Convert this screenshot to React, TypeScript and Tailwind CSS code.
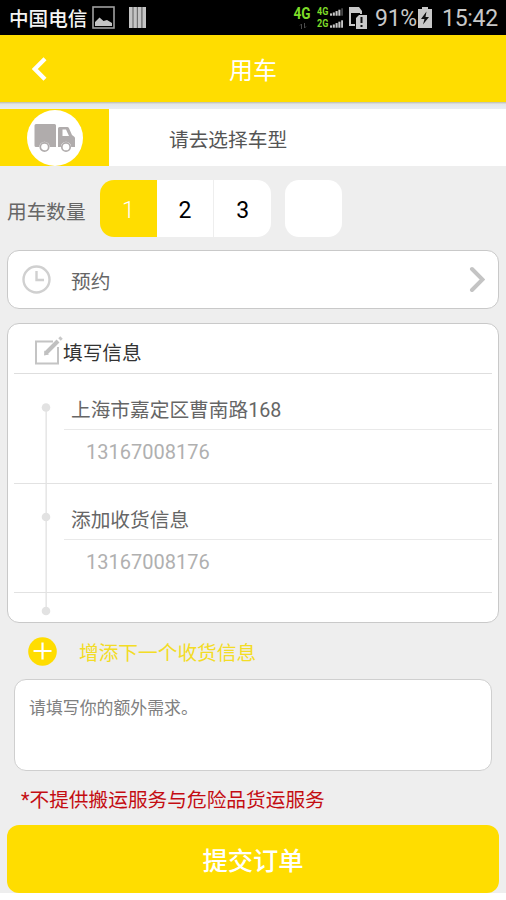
import React, { useState } from 'react';

const stops = [
  { id: 'from', title: '上海市嘉定区曹南路168', phone: '13167008176' },
  { id: 'to', title: '添加收货信息', phone: '13167008176' },
];

const SignalBars = ({ dim }: { dim?: boolean }) => (
  <svg className="h-[8px] w-[13px]" viewBox="0 0 14 8" fill="#c8c8c8">
    <rect x="0" y="5.5" width="2.2" height="2.5" />
    <rect x="3" y="4.5" width="2.2" height="3.5" />
    <rect x="6" y="3" width="2.2" height="5" />
    <rect x="9" y="1.5" width="2.2" height="6.5" />
    <rect x="12" y="0" width="2" height="8" fill={dim ? '#444' : '#c8c8c8'} />
  </svg>
);

const StatusBar = () => (
  <div className="flex h-[35px] items-center bg-black pl-[9px] pr-[8px] text-[#c8c8c8]">
    <span className="pt-[4px] text-[19.6px] font-medium leading-[31px] text-[#f4f4f4]">中国电信</span>
    <svg className="ml-[5px] h-[23px] w-[23px]" viewBox="0 0 23 23">
      <rect x="1" y="1" width="21" height="21" fill="none" stroke="#a0a0a0" strokeWidth="1.6" />
      <path d="M3 20v-4l4.5-4.5 4 3.5 3.5-1 5 3v3z" fill="#c4c4c4" />
    </svg>
    <svg className="ml-[14px] h-[21px] w-[17px]" viewBox="0 0 17 21">
      <rect width="17" height="21" fill="#707070" />
      <path d="M0 0h3.4v21H0zM4.6 0h3.2v21H4.6zM9 0h3.2v21H9zM13.6 0H17v21h-3.4z" fill="#c4c4c4" />
    </svg>
    <div className="flex-1" />
    <div className="flex h-[22px] w-[17px] flex-col items-center">
      <span className="scale-x-[.85] text-[16px] font-bold leading-[14px] text-[#7ddb28]">4G</span>
      <svg className="mt-[2px] h-[6px] w-[8px]" viewBox="0 0 8 6" fill="none" stroke="#4a4a4a">
        <path d="M2.5 6V1L1 2.5M5.5 0v5L7 3.5" />
      </svg>
    </div>
    <div className="ml-[6px] mr-[6px] flex w-[26px] flex-col gap-[4px] text-[10px] font-bold leading-[8px] text-[#7ddb28]">
      <div className="flex h-[8px] items-center justify-between">
        <span className="w-[12px] origin-left scale-x-[.9]">4G</span>
        <SignalBars dim />
      </div>
      <div className="flex h-[8px] items-center justify-between">
        <span className="w-[12px] origin-left scale-x-[.9]">2G</span>
        <SignalBars />
      </div>
    </div>
    <svg className="h-[22px] w-[18px]" viewBox="0 0 18 22">
      <path d="M0 0h10l3 4v3h-2V6H2v11h4v2H0z" fill="#c8c8c8" />
      <path d="M10 8h8v14H7V11z" fill="#c8c8c8" />
      <path d="M11.5 10h2v6h-2zM11.5 18h2v2h-2z" fill="#111" />
    </svg>
    <span className="ml-[8px] w-[43px] whitespace-nowrap pt-[2px] text-[23px] leading-[33px] tracking-[-0.3px]">91%</span>
    <svg className="h-[21px] w-[14px]" viewBox="0 0 14 21">
      <path d="M4 0h6v2h4v19H0V2h4z" fill="#c8c8c8" />
      <path d="M8.5 4.5L3 12h3.5L5 17.5 11 10H7.5z" fill="#111" />
    </svg>
    <span className="ml-[10px] w-[56px] whitespace-nowrap pt-[2px] text-[23px] leading-[33px] tracking-[-0.3px]">15:42</span>
  </div>
);

const TruckIcon = () => (
  <svg className="h-[30px] w-[41px]" viewBox="0 0 41 30">
    <path d="M2 1h18.5A1.5 1.5 0 0 1 22 2.5V24H2a1.500 1.500 0 0 1-1.500-1.500v-20A1.500 1.500 0 0 1 2 1z" fill="#b0acac" />
    <path d="M25.500 4H33a2 2 0 0 1 2 1.200l3 6.800 2 1.500a2 2 0 0 1 1 1.700V24H24V5.500A1.500 1.500 0 0 1 25.500 4z" fill="#b0acac" />
    <path d="M28.500 6.500H32l3 6.500h-6.500z" fill="#fff" />
    <circle cx="10.500" cy="24" r="5.200" fill="#fff" />
    <circle cx="32" cy="24" r="5.200" fill="#fff" />
    <circle cx="10.500" cy="24" r="4.200" fill="#fff" stroke="#b0acac" strokeWidth="1.700" />
    <circle cx="32" cy="24" r="4.200" fill="#fff" stroke="#b0acac" strokeWidth="1.700" />
  </svg>
);

const App = () => {
  const [count, setCount] = useState(1);
  const [note, setNote] = useState('');

  return (
    <div className="h-[900px] w-[506px] overflow-hidden bg-white font-['Roboto','Noto_Sans_CJK_SC',sans-serif]">
      <StatusBar />

      <header className="flex h-[67px] items-center bg-[#ffdd00] text-white">
        <svg className="ml-[32px] h-[24px] w-[15px]" viewBox="0 0 15 24" fill="none" stroke="#fff" strokeWidth="4.2">
          <path d="M13 1.8L2.8 12 13 22.2" />
        </svg>
        <h1 className="mr-[47px] flex-1 pt-[6px] text-center text-[24px] font-normal leading-[61px]">用车</h1>
      </header>
      <div className="h-[7px] bg-linear-to-b from-[#bdbbaa] via-[#e2e6ea] via-30% to-[#e9edf4]" />

      <main className="h-[784px] bg-[#eeeeee]">
        <div className="flex h-[57px] items-center bg-white">
          <div className="flex h-full w-[109px] items-center justify-center bg-[#ffdd00]">
            <div className="flex h-[56px] w-[56px] items-center justify-center rounded-full bg-white">
              <TruckIcon />
            </div>
          </div>
          <span className="ml-[60px] pt-[6px] text-[19.7px] leading-[51px] text-[#555]">请去选择车型</span>
        </div>

        <div className="mt-[14px] flex h-[57px] items-center">
          <span className="ml-[7px] w-[93px] pt-[8px] text-[19.7px] leading-[49px] text-[#666]">用车数量</span>
          <div className="flex h-[57px] w-[171px] overflow-hidden rounded-[14px]">
            {[1, 2, 3].map(n => (
              <button
                key={n}
                onClick={() => setCount(n)}
                className={`flex-1 pt-[6px] text-[23px] ${n === 3 ? 'border-l border-[#eee]' : ''} ${
                  count === n ? 'bg-[#ffdd00] font-light text-white' : 'bg-white text-black'
                }`}
              >
                {n}
              </button>
            ))}
          </div>
          <div className="ml-[14px] h-[57px] w-[57px] rounded-[14px] bg-white" />
        </div>

        <div className="mx-[7px] mt-[13px] flex h-[59px] items-center rounded-[12px] border-[1.5px] border-[#c9c9c9] bg-white">
          <svg className="ml-[14px] h-[29px] w-[29px]" viewBox="0 0 29 29" fill="none" stroke="#d0d0d0" strokeWidth="2.4">
            <circle cx="14.5" cy="14.5" r="13" />
            <path d="M14.5 6v9H22" />
          </svg>
          <span className="ml-[20px] flex-1 pt-[6px] text-[19.7px] leading-[51px] text-[#666]">预约</span>
          <svg
            className="mr-[13px] h-[27px] w-[16px]"
            viewBox="0 0 16 27"
            fill="none"
            stroke="#c4c4c4"
            strokeWidth="4"
            strokeLinecap="round"
          >
            <path d="M3 3l10.5 10.5L3 24" />
          </svg>
        </div>

        <section className="relative mx-[7px] mt-[14px] h-[300px] rounded-[12px] border-[1.5px] border-[#c9c9c9] bg-white px-[6px]">
          <div className="flex h-[50px] items-center border-b border-[#dedede] pl-[20px] pt-[4px]">
            <svg className="h-[29px] w-[29px]" viewBox="0 0 29 29">
              <path d="M19 5.5H2v22h22V11" fill="none" stroke="#c4c4c4" strokeWidth="2" />
              <path d="M11.5 17.5L24 5" stroke="#c0c0c0" strokeWidth="4" />
              <path d="M10 19.500l.5-5 4.500 4z" fill="#c0c0c0" />
              <path d="M25.500 3.500L27.500 1.500" stroke="#c8c8c8" strokeWidth="3.500" />
            </svg>
            <span className="pt-[6px] text-[19.7px] leading-[39px] text-[#333]">填写信息</span>
          </div>

          {stops.map(stop => (
            <div key={stop.id} className="h-[109.6px] border-b-[1.5px] border-[#e2e2e2] pl-[50px]">
              <div className="h-[56px] border-b border-[#e9e9e9] pl-[7px] pt-[9px] text-[19.7px] leading-[55px] text-[#666]">
                {stop.title}
              </div>
              <div className="pl-[22px] text-[20px] leading-[44px] text-[#b0b0b0]">{stop.phone}</div>
            </div>
          ))}

          {/* route line with a dot per stop */}
          <svg className="absolute left-[33px] top-[78px] h-[214px] w-[10px]" viewBox="0 0 10 214" fill="#e2e2e2">
            <rect x="4.5" y="5" width="1.3" height="204" />
            <circle cx="5" cy="5.5" r="4.3" />
            <circle cx="5" cy="115" r="4.3" />
            <circle cx="5" cy="209" r="4.3" />
          </svg>
        </section>

        <button className="flex h-[56px] items-center pl-[28px]">
          <svg className="h-[29px] w-[29px]" viewBox="0 0 29 29">
            <circle cx="14.5" cy="14.5" r="14.3" fill="#ffdd00" />
            <path d="M14.5 5.500v17M5.500 14h18" stroke="#fff" strokeWidth="2.200" />
          </svg>
          <span className="ml-[22px] pt-[5px] text-[19.7px] leading-[51px] text-[#f3dc25]">增添下一个收货信息</span>
        </button>

        <textarea
          value={note}
          onChange={e => setNote(e.target.value)}
          placeholder="请填写你的额外需求。"
          className="mx-[14px] block h-[92px] w-[478px] resize-none rounded-[12px] border-[1.5px] border-[#cfcfcf] bg-white px-[14px] pt-[15px] text-[16.9px] leading-[26px] placeholder:text-[#808080]"
        />

        <p className="pl-[21px] pt-[4px] text-[19.7px] leading-[52px] text-[#c40d12]">*不提供搬运服务与危险品货运服务</p>

        <button className="-mt-[2px] ml-[7px] block h-[68px] w-[492px] rounded-[12px] bg-[#ffdd00] pt-[5px] text-[25.3px] font-medium leading-[63px] text-white">
          提交订单
        </button>
      </main>
    </div>
  );
};

export default App;
